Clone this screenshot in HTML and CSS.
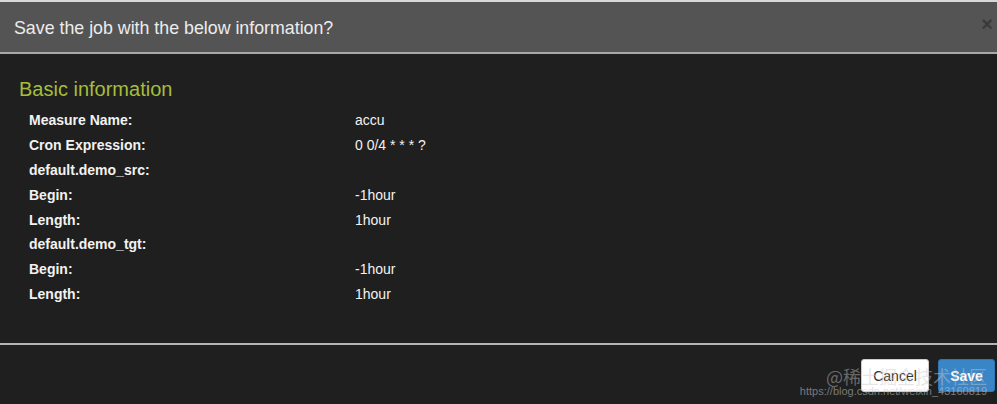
FILE: index.html
```html
<!DOCTYPE html>
<html>
<head>
<meta charset="utf-8">
<link rel="stylesheet" href="styles.css">
</head>
<body>
<div class="modal">
  <div class="modal-header">
    <h4 class="modal-title">Save the job with the below information?</h4>
    <span class="close">×</span>
  </div>
  <div class="modal-body">
    <h3 class="section-title">Basic information</h3>
    <div class="info">
      <div class="label">Measure Name:</div><div class="value">accu</div>
      <div class="label">Cron Expression:</div><div class="value">0 0/4 * * * ?</div>
      <div class="label">default.demo_src:</div><div class="value"></div>
      <div class="label">Begin:</div><div class="value">-1hour</div>
      <div class="label">Length:</div><div class="value">1hour</div>
      <div class="label">default.demo_tgt:</div><div class="value"></div>
      <div class="label">Begin:</div><div class="value">-1hour</div>
      <div class="label">Length:</div><div class="value">1hour</div>
    </div>
  </div>
  <div class="modal-footer">
    <button class="btn btn-default">Cancel</button>
    <button class="btn btn-primary">Save</button>
    <div class="watermark">
      <div class="wm-big">@稀土掘金技术社区</div>
      <div class="wm-small">https://blog.csdn.net/weixin_43160819</div>
    </div>
  </div>
</div>
</body>
</html>
```
FILE: styles.css
```css
* { box-sizing: border-box; }
html, body {
  margin: 0;
  padding: 0;
  background: #1f1f1f;
  font-family: "Liberation Sans", Arial, sans-serif;
}
.modal {
  width: 997px;
  height: 404px;
  background: #1f1f1f;
  border-top: 2px solid #d8d8d8;
  display: flex;
  flex-direction: column;
}
.modal-header {
  height: 52px;
  background: #545454;
  border-bottom: 2px solid #a9a9a9;
  display: flex;
  align-items: center;
  justify-content: space-between;
  padding: 0 4px 0 14px;
}
.modal-title {
  margin: 0;
  font-size: 17.8px;
  font-weight: normal;
  color: #ececec;
  padding-top: 2px;
}
.close {
  font-size: 20px;
  font-weight: bold;
  color: #3a3a3a;
  line-height: 1;
  padding-bottom: 6px;
}
.modal-body {
  height: 291px;
  padding: 23px 19px 0;
  border-bottom: 2px solid #b4b4b4;
}
.section-title {
  margin: 0 0 7px;
  font-size: 20px;
  font-weight: normal;
  color: #a6bd3b;
  line-height: 24px;
}
.info {
  display: grid;
  grid-template-columns: 326px 1fr;
  grid-auto-rows: 24.8px;
  padding-left: 10px;
  font-size: 14px;
  align-items: center;
}
.label {
  font-weight: bold;
  color: #f2f2f2;
}
.value {
  color: #f2f2f2;
}
.modal-footer {
  flex: 1;
  display: flex;
  justify-content: flex-end;
  align-items: flex-start;
  padding: 14px 2px 0 0;
  gap: 9px;
  position: relative;
}
.btn {
  height: 33px;
  font-family: "Liberation Sans", Arial, sans-serif;
  font-size: 14px;
  border-radius: 3px;
  padding: 0 10px;
}
.btn-default {
  width: 68px;
  background: #ffffff;
  border: 1px solid #cccccc;
  color: #333;
}
.btn-primary {
  width: 57px;
  background: #3a85c6;
  border: 1px solid #2f76b5;
  color: #fff;
  font-weight: bold;
}
.watermark {
  position: absolute;
  right: 10px;
  top: 21px;
  text-align: right;
  pointer-events: none;
}
.wm-big {
  font-family: "Noto Sans CJK SC", sans-serif;
  font-size: 18px;
  line-height: 20px;
  color: rgba(200, 200, 200, 0.45);
}
.wm-small {
  font-size: 11px;
  line-height: 10px;
  color: rgba(200, 200, 200, 0.55);
}
```
